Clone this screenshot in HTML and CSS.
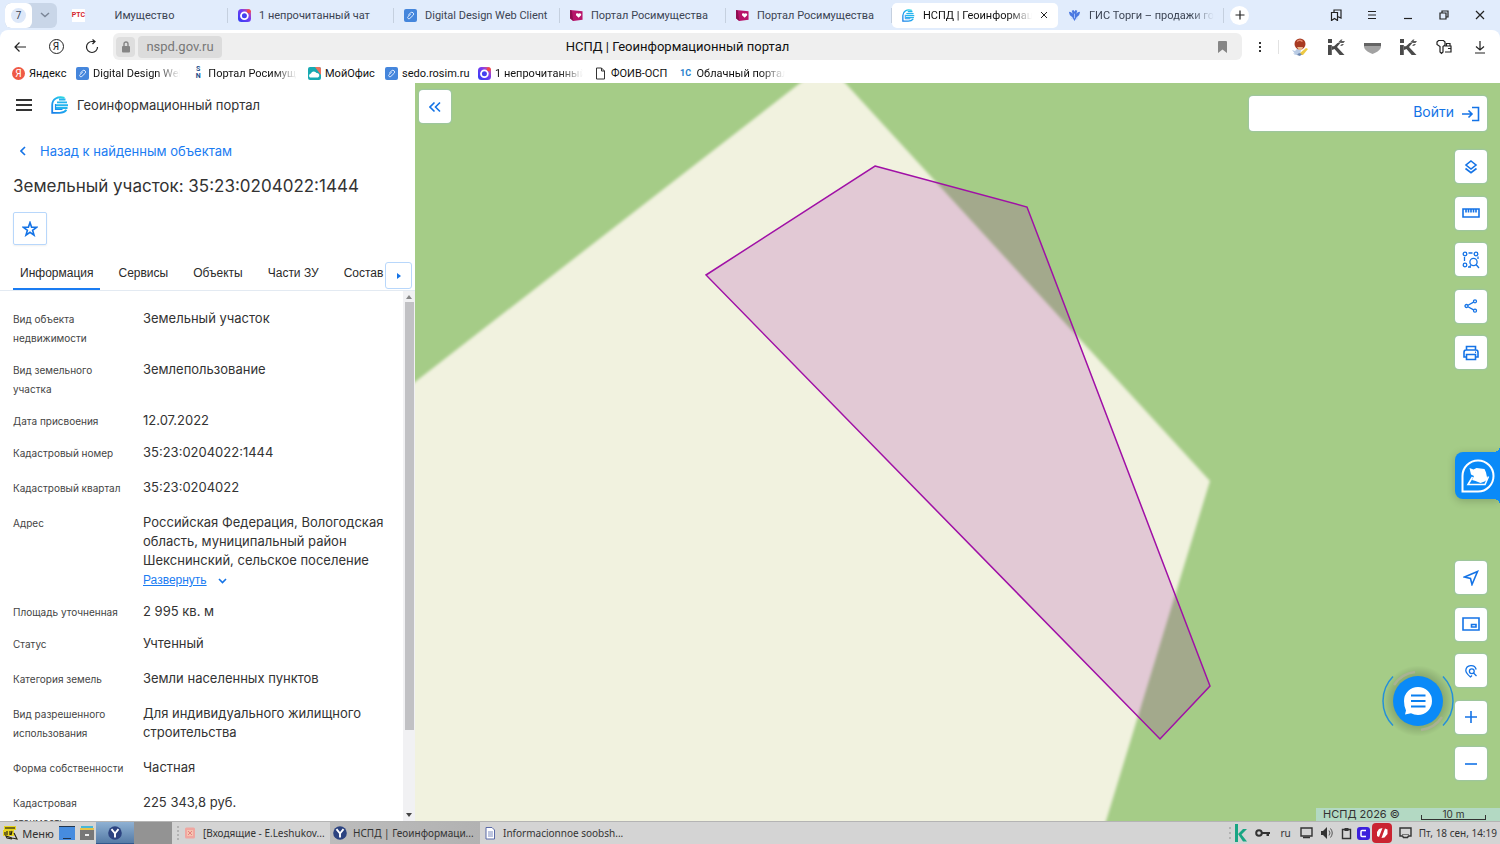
FILE: index.html
```html
<!DOCTYPE html>
<html lang="ru">
<head>
<meta charset="utf-8">
<title>НСПД | Геоинформационный портал</title>
<link rel="stylesheet" href="styles.css">
</head>
<body>
<svg class="defs" aria-hidden="true">
  <defs>
    <linearGradient id="gNspd" x1="0" y1="1" x2="1" y2="0"><stop offset="0" stop-color="#1a7fe8"/><stop offset=".5" stop-color="#1ea8f0"/><stop offset="1" stop-color="#2fe6dc"/></linearGradient>
    <linearGradient id="gChat" x1="0" y1="1" x2="1" y2="0"><stop offset="0" stop-color="#2b3df5"/><stop offset=".6" stop-color="#7a3cf0"/><stop offset="1" stop-color="#ff5a6a"/></linearGradient>
    <symbol id="clip" viewBox="0 0 13 13"><rect width="13" height="13" rx="2" fill="#4586dc"/><path d="M4.2 6.2 6.6 3.8a1.7 1.7 0 0 1 2.5 2.5L5.9 9.4A1.3 1.3 0 0 1 4 7.600L6.800 5" fill="none" stroke="#dceaff" stroke-width="1"/></symbol>
    <symbol id="chat" viewBox="0 0 13 13"><rect width="13" height="13" rx="3.500" fill="url(#gChat)"/><circle cx="6.400" cy="6.800" r="4.300" fill="#fff"/><circle cx="6.400" cy="6.800" r="2.500" fill="#4440f0"/><circle cx="10.800" cy="2.200" r="1.900" fill="#f04848"/></symbol>
    <symbol id="rosim" viewBox="0 0 14 13"><path d="M0 .5 13.500 2v9L3.500 12.500 0 9.500z" fill="#b8146a"/><path d="M3.500 12.500 0 9.500 0 .5l2 1z" fill="#8e0d50"/><path d="M9.300 9 6.500 6.200a1.600 1.600 0 0 1 2.800-1.500 1.600 1.600 0 0 1 2.700 1.600z" fill="#fff"/></symbol>
    <symbol id="nspd" viewBox="0 0 18 18"><path d="M13.500 1.900C6.500-.2 1.200 3.500 1.200 9v7.800h7.500c3 0 5.300-1.200 6.800-3" fill="none" stroke="url(#gNspd)" stroke-width="1.800"/><path d="M8 3.500h6.500M6 6.400h10M5 9.200h12M5 12h11.500" fill="none" stroke="#24b4ee" stroke-width="1.900"/><path d="M4.500 8v5.500h7" fill="none" stroke="#1d8fee" stroke-width="1.200"/></symbol>
    <symbol id="kext" viewBox="0 0 17 16"><path d="M0 0h4v4H0zM0 6h3.800v10H0zM4 7.200h2L9.500 4h2.800L9 8l7.500 8h-4.800L6.500 10 4 11z" fill="#4a4a4a"/><path d="m10 3.500 3-3h1.500l-1 1.500h3.500l-1.500 2h-2M12 6.500l2-1.500h2l-2 2z" fill="#5c5c5c"/></symbol>
    <symbol id="yball" viewBox="0 0 14 14"><circle cx="7" cy="7" r="6.800" fill="#2c4380"/><path d="m3.500 3.200 3.500 4.300v4M10.500 3.200 7 7.500" fill="none" stroke="#fff" stroke-width="1.900"/></symbol>
  </defs>
</svg>

<header class="browser">
  <nav class="tabbar" aria-label="Вкладки">
    <div class="tabgroup"><button class="count"><span>7</span></button><button class="drop" aria-label="Список вкладок"><svg width="10" height="6" viewBox="0 0 10 6"><path d="m1 1 4 3.500L9 1"/></svg></button></div>
    <button class="tab tab-center"><span class="rts">РТС</span><span class="tab-name">Имущество</span></button>
    <button class="tab"><svg class="fav"><use href="#chat"/></svg><span class="tab-name">1 непрочитанный чат</span></button>
    <button class="tab"><svg class="fav"><use href="#clip"/></svg><span class="tab-name">Digital Design Web Client</span></button>
    <button class="tab"><svg class="fav"><use href="#rosim"/></svg><span class="tab-name">Портал Росимущества</span></button>
    <button class="tab"><svg class="fav"><use href="#rosim"/></svg><span class="tab-name">Портал Росимущества</span></button>
    <button class="tab tab-active"><svg class="fav"><use href="#nspd"/></svg><span class="tab-name fade">НСПД | Геоинформаци</span><svg class="close" viewBox="0 0 8 8"><path d="m1 1 6 6M7 1 1 7"/></svg></button>
    <button class="tab"><svg class="fav" viewBox="0 0 14 14"><path d="M1 3c2 0 3 1 4 2L4 2l2-1 1 2 1-2 2 1-1 3c1-1 2-2 4-2-.5 3-1 4.500-3.500 5.500L7 13 4.500 8.500C2 7.500 1.500 6 1 3z" fill="#4b78e0"/><path d="M3.500 9.500 5 11m5.500-1.500L9 11M7 5v5" stroke="#a9c4ff" fill="none"/></svg><span class="tab-name fade">ГИС Торги – продажи гос</span></button>
    <button class="newtab" aria-label="Новая вкладка"><svg width="12" height="12" viewBox="0 0 12 12"><path d="M6 1.500v9M1.500 6h9"/></svg></button>
    <div class="slots">
      <button aria-label="Коллекции"><svg width="12" height="12" viewBox="0 0 12 12"><path d="M1.500 3.500h6v8l-3-2-3 2zM4 3.500V1h7v8L7.500 7.500"/></svg></button>
      <button aria-label="Меню"><svg width="12" height="12" viewBox="0 0 12 12"><path d="M2 2.500h8M2 6h8M2 9.500h8"/></svg></button>
      <button aria-label="Свернуть"><svg width="12" height="12" viewBox="0 0 12 12"><path d="M2 9.500h8"/></svg></button>
      <button aria-label="Развернуть"><svg width="12" height="12" viewBox="0 0 12 12"><path d="M2 4h6v6H2zM4 4V2h6v6H8"/></svg></button>
      <button aria-label="Закрыть"><svg width="12" height="12" viewBox="0 0 12 12"><path d="m2 2 8 8M10 2l-8 8"/></svg></button>
    </div>
  </nav>

  <div class="toolbar">
    <div class="slots">
      <button aria-label="Назад"><svg width="14" height="14" viewBox="0 0 14 14"><path d="M13 7H2M6.500 2.500 2 7l4.500 4.500"/></svg></button>
      <button aria-label="Яндекс"><span class="ya-ring">Я</span></button>
      <button aria-label="Обновить"><svg width="16" height="16" viewBox="0 0 16 16"><path d="M13.500 8A5.500 5.500 0 1 1 8 2.500h3M8.500.5l2.500 2-2.500 2.500"/></svg></button>
    </div>
    <div class="address">
      <button class="lock" aria-label="Сведения о сайте"><svg width="10" height="12" viewBox="0 0 10 12"><rect x="1" y="5" width="8" height="6.500" rx="1" fill="#858585"/><path d="M3 5V3a2 2 0 0 1 4 0v2" fill="none" stroke="#858585" stroke-width="1.400"/></svg></button>
      <button class="host">nspd.gov.ru</button>
      <span class="page-title">НСПД | Геоинформационный портал</span>
      <button class="mark" aria-label="Закладка"><svg width="9" height="12" viewBox="0 0 9 12"><path d="M0 1q0-1 1-1h7q1 0 1 1v11L4.500 8.500 0 12z" fill="#868686"/></svg></button>
    </div>
    <button class="dots" aria-label="Ещё"><svg width="4" height="12" viewBox="0 0 4 12"><path d="M1 1h2v2H1zM1 5h2v2H1zM1 9h2v2H1z" fill="#333"/></svg></button>
    <div class="slots ext">
      <button aria-label="Расширение"><svg width="18" height="18" viewBox="0 0 18 18"><g class="solid"><path d="m1 12 3 1 2-2 4 1-1 5H5zM2 15l3 1-1 1z" fill="#b9cbe4"/><circle cx="9" cy="6" r="5.500" fill="#a83a22"/><path d="M5.500 3q3.500-3 6.500 0l-1 1q-2.500-2-4.500 0z" fill="#e58b70"/><path d="M6 9h6l-1 3H8z" fill="#e9b98e"/><path d="m9 15 6-5 2 1-5 6H9z" fill="#eec943"/><path d="m8 15 3 1-2 2-3-1z" fill="#6d86ad"/></g></svg></button>
      <button aria-label="Расширение K"><svg class="solid" width="17" height="16"><use href="#kext"/></svg></button>
      <button aria-label="Pocket"><svg class="solid" width="17" height="16" viewBox="0 0 17 16"><path d="M0 4h17v4H0z" fill="#646464"/><path d="M0 7h17c0 4-4 6-8.500 8C4 13 0 11 0 7z" fill="#a2a2a2"/></svg></button>
      <button aria-label="Расширение K"><svg class="solid" width="17" height="16"><use href="#kext"/></svg></button>
      <button aria-label="Пароли"><svg width="16" height="16" viewBox="0 0 16 16"><path d="M2.500 1.500h5L9 3v3L7 7.500V13l-1.500 1.500L4 13V7.500L1 5.500V3zM8.500 7h6.500v6H9M10.500 7V4.500H14V7M12 9.500h3"/></svg></button>
      <button aria-label="Загрузки"><svg width="14" height="16" viewBox="0 0 14 16"><path d="M7 2v9M3 7.500 7 11l4-3.500M2 14h10"/></svg></button>
    </div>
  </div>

  <nav class="bookmarks" aria-label="Закладки">
    <a href="#" class="bm1"><span class="ya-red">Я</span><span>Яндекс</span></a>
    <a href="#" class="bm2"><svg class="fav"><use href="#clip"/></svg><span class="fade">Digital Design Web</span></a>
    <a href="#" class="bm3"><span class="sn"><b>S</b><b>N</b></span><span class="fade">Портал Росимуще</span></a>
    <a href="#" class="bm4"><svg class="fav" viewBox="0 0 13 13"><rect width="13" height="13" rx="2" fill="#18aab2"/><path d="M7 0h4q2 0 2 2v6z" fill="#f2715b"/><path d="M2 10.500a2.200 2.200 0 0 1 1-4A3 3 0 0 1 8.500 6a2.400 2.400 0 0 1 1.500 4.500z" fill="#fff"/></svg><span>МойОфис</span></a>
    <a href="#" class="bm5"><svg class="fav"><use href="#clip"/></svg><span>sedo.rosim.ru</span></a>
    <a href="#" class="bm6"><svg class="fav"><use href="#chat"/></svg><span class="fade">1 непрочитанный</span></a>
    <a href="#" class="bm7"><svg class="fav" viewBox="0 0 13 13"><path d="M2.500 1h5l3 3v8h-8zM7.500 1v3h3" fill="none" stroke="#333"/></svg><span>ФОИВ-ОСП</span></a>
    <a href="#" class="bm8"><span class="onec">1С</span><span class="fade">Облачный портал</span></a>
  </nav>
</header>

<main class="work">
  <aside class="panel">
    <div class="brand">
      <button class="burger" aria-label="Меню портала"><svg width="16" height="12" viewBox="0 0 16 12"><path d="M0 1h16M0 6h16M0 11h16"/></svg></button>
      <svg class="logo" width="18" height="18"><use href="#nspd"/></svg>
      <span>Геоинформационный портал</span>
    </div>
    <a href="#" class="back"><svg width="6" height="10" viewBox="0 0 6 10"><path d="M5 1 1 5l4 4"/></svg><span>Назад к найденным объектам</span></a>
    <h1>Земельный участок: 35:23:0204022:1444</h1>
    <button class="star" aria-label="В избранное"><svg width="16" height="16" viewBox="0 0 16 16"><path d="m8 1.500 1.600 4.700 4.900.1-3.900 3 1.400 4.800L8 11.300l-4 2.800 1.400-4.800-3.900-3 4.900-.1z"/></svg></button>
    <div class="tabs" role="tablist">
      <button role="tab" aria-selected="true" class="on">Информация</button>
      <button role="tab">Сервисы</button>
      <button role="tab">Объекты</button>
      <button role="tab">Части ЗУ</button>
      <button role="tab">Состав</button>
      <button class="more" aria-label="Прокрутить вкладки"><svg width="4" height="6" viewBox="0 0 4 6"><path d="M0 0v6l4-3z"/></svg></button>
    </div>
    <div class="scroll">
      <dl>
        <div class="tight"><dt>Вид объекта недвижимости</dt><dd>Земельный участок</dd></div>
        <div class="tight"><dt>Вид земельного участка</dt><dd>Землепользование</dd></div>
        <div class="tight"><dt>Дата присвоения</dt><dd>12.07.2022</dd></div>
        <div><dt>Кадастровый номер</dt><dd>35:23:0204022:1444</dd></div>
        <div><dt>Кадастровый квартал</dt><dd>35:23:0204022</dd></div>
        <div class="tight"><dt>Адрес</dt><dd>Российская Федерация, Вологодская область, муниципальный район Шекснинский, сельское поселение<button class="expand"><u>Развернуть</u><svg width="9" height="6" viewBox="0 0 9 6"><path d="m1 1 3.500 3.500L8 1"/></svg></button></dd></div>
        <div class="tight"><dt>Площадь уточненная</dt><dd>2 995 кв. м</dd></div>
        <div><dt>Статус</dt><dd>Учтенный</dd></div>
        <div><dt>Категория земель</dt><dd>Земли населенных пунктов</dd></div>
        <div><dt>Вид разрешенного использования</dt><dd>Для индивидуального жилищного строительства</dd></div>
        <div><dt>Форма собственности</dt><dd>Частная</dd></div>
        <div><dt>Кадастровая стоимость</dt><dd>225 343,8 руб.</dd></div>
      </dl>
      <div class="rail" aria-hidden="true"><svg width="6" height="4" viewBox="0 0 6 4"><path d="M0 4h6L3 0z" fill="#888"/></svg><i></i><svg width="6" height="4" viewBox="0 0 6 4"><path d="M0 0h6L3 4z" fill="#444"/></svg></div>
    </div>
  </aside>

  <section class="map" aria-label="Карта">
    <svg class="canvas" viewBox="0 0 1085 738" preserveAspectRatio="xMinYMin slice">
      <filter id="soft"><feGaussianBlur stdDeviation="1.500"/></filter>
      <rect width="1085" height="738" fill="#a5cc87"/>
      <path d="M-20 314 0 299 398-10h23L795 398 691 738l-6 20H-20z" fill="#f1f2df" filter="url(#soft)"/>
      <path d="M460 83 612 124 795 603 745 656 291 192z" fill="#9b00a8" fill-opacity=".17" stroke="#a010a6" stroke-width="1.500"/>
    </svg>
    <button class="mbtn collapse" aria-label="Свернуть панель"><svg width="12" height="12" viewBox="0 0 12 12"><path d="M5.500 1.500 1 6l4.500 4.500M11 1.500 6.500 6l4.500 4.500"/></svg></button>
    <div class="login"><button><span>Войти</span><svg width="18" height="16" viewBox="0 0 18 16"><path d="M0 8h10M6.500 4.500 10 8l-3.500 3.500M10 1.500h6.500v13H10"/></svg></button></div>
    <div class="tools tools-top">
      <button class="mbtn" aria-label="Слои"><svg width="14" height="14" viewBox="0 0 14 14"><path d="m7 1 5 4-5 4-5-4zM1.500 8.500 7 12.700l5.500-4.200"/></svg></button>
      <button class="mbtn" aria-label="Линейка"><svg width="18" height="10" viewBox="0 0 18 10"><path d="M1 1h16v8H1zM4 1v3.500M6.500 1v3.500M9 1v3.500M11.500 1v3.500M14 1v3.500"/></svg></button>
      <button class="mbtn" aria-label="Поиск в области"><svg width="18" height="18" viewBox="0 0 18 18"><g><circle cx="3" cy="3" r="1.800"/><circle cx="14" cy="3" r="1.800"/><circle cx="3" cy="14" r="1.800"/><path d="M6.500 2h4M2.500 6v4M16 5.500v2.500M6 16h3"/><circle cx="11.500" cy="11" r="3.600"/><path d="m14 13.500 3 3.500M9 14.500l-1.500 1"/></g></svg></button>
      <button class="mbtn" aria-label="Поделиться"><svg width="14" height="14" viewBox="0 0 14 14"><g><circle cx="2.500" cy="7" r="1.500"/><circle cx="11" cy="2.300" r="1.500"/><circle cx="11" cy="11.700" r="1.500"/><path d="m4 6.200 5.600-3.100M4 7.800l5.600 3.100"/></g></svg></button>
      <button class="mbtn" aria-label="Печать"><svg width="18" height="16" viewBox="0 0 18 16"><path d="M4.500 5V1.500h9V5M4.500 12H2V7.500Q2 5 4 5h10q2 0 2 2.500V12h-2.500M4.500 9.500h9v5h-9z"/><path d="M13 7.300h1"/></svg></button>
    </div>
    <button class="promo" aria-label="Поддержка участников"><svg width="34" height="34" viewBox="0 0 34 34"><path d="M1.500 32.500V17A15.500 15.500 0 1 1 17 32.500z" fill="none" stroke="#fff" stroke-width="2"/><path d="m8.500 9 4 1.500 3-1.500 8 1 1.500 3.500 1.500 7-3 2-4 1.500-5-2-3.500-1 2-4-3-1.500z" fill="#fff"/><path d="m11.500 18-4.500 7.500h17l3.500-8" fill="none" stroke="#fff" stroke-width="1.600"/></svg></button>
    <div class="tools tools-bottom">
      <button class="mbtn" aria-label="Моё местоположение"><svg width="16" height="16" viewBox="0 0 16 16"><path d="M14.500 1.500 1.500 7l6 1.500 1.500 6z"/></svg></button>
      <button class="mbtn" aria-label="Обзорная карта"><svg width="18" height="14" viewBox="0 0 18 14"><path d="M1 1h16v12H1zM9.500 7.500h4.500V10H9.500z"/></svg></button>
      <button class="mbtn" aria-label="Поиск по координатам"><svg width="14" height="14" viewBox="0 0 14 14"><g><path d="M12.200 5.500A5.300 5.300 0 0 0 1.800 6.500C2 9 4 11 6.500 13L8 11.500"/><circle cx="7.800" cy="7.300" r="2.400"/><path d="m9.500 9 3 3"/></g></svg></button>
      <button class="mbtn" aria-label="Приблизить"><svg width="14" height="14" viewBox="0 0 14 14"><path d="M7 1v12M1 7h12"/></svg></button>
      <button class="mbtn" aria-label="Отдалить"><svg width="14" height="14" viewBox="0 0 14 14"><path d="M1 7h12"/></svg></button>
    </div>
    <button class="chat" aria-label="Чат"><svg width="72" height="72" viewBox="0 0 72 72"><path d="M11 11.500a35 35 0 0 0 0 49M61 11.500a35 35 0 0 1 0 49" fill="none" stroke="#2590d8" stroke-width="1.500"/><path d="M12 20A29 29 0 0 1 33 7M60 52A29 29 0 0 1 39 65" fill="none" stroke="#a9b294" stroke-width="2.500"/><circle cx="36" cy="36" r="25" fill="#0a8af8"/><path d="M22 36a14 14 0 1 1 14 14q-4 0-7-1.800L23 49.500l1-4q-2-4-2-9.500z" fill="#fff"/><path d="M29 30.500h14.500M29 36h14.500M29 41.500h14.500" stroke="#0a7ff0" stroke-width="2.200"/></svg></button>
    <div class="credit"><span>НСПД 2026 ©</span><span class="scale">10 m</span></div>
  </section>
</main>

<footer class="taskbar">
  <button class="start"><svg width="15" height="16" viewBox="0 0 15 16"><path d="M1 1h12v4H1zM0 5h11v6H0z" fill="#e8d520"/><path d="M3 2v2M5 2v2M7 2v2M9 2v2M11 2v2M2 7v3M4 6v4M7 6v4M9 6l-1 4M11 8l3 6-5-1-6-2 1 2 5 1" stroke="#282514" fill="none" stroke-width="1.200"/></svg>Меню</button>
  <button class="launch" aria-label="Рабочий стол"><svg width="16" height="16" viewBox="0 0 16 16"><path d="M0 1h16v14H0z" fill="#468cdf"/><path d="M0 1h16v1H0zM4 13h8v1H4z" fill="#21364f"/></svg></button>
  <button class="launch" aria-label="Файлы"><svg width="16" height="16" viewBox="0 0 16 16"><path d="M2 1h12v2H2z" fill="#47b7d8"/><path d="M1 3h14v2H1z" fill="#e5c44b"/><path d="M1 5h14v10H1z" fill="#777"/><path d="M6 9h4v2H6z" fill="#eee"/></svg></button>
  <button class="desk desk-on" aria-label="Рабочее место 1"><svg width="14" height="14"><use href="#yball"/></svg></button>
  <button class="desk" aria-label="Рабочее место 2"></button>
  <svg class="grip" width="4" height="16" viewBox="0 0 4 16"><path d="M1 1h2v2H1zM1 5h2v2H1zM1 9h2v2H1zM1 13h2v2H1z" fill="#b2b2b2"/></svg>
  <button class="task"><svg width="14" height="14" viewBox="0 0 14 14"><rect x="2" y="1.500" width="10" height="11" rx="1.500" fill="#f0a6a0"/><path d="M4 4h6v6H4z" fill="#f5c4b0"/><path d="m5 5 4 4M9 5 5 9" stroke="#e77f7f"/></svg>[Входящие - E.Leshukov...</button>
  <button class="task task-on"><svg width="14" height="14"><use href="#yball"/></svg>НСПД | Геоинформаци...</button>
  <button class="task"><svg width="14" height="14" viewBox="0 0 14 14"><path d="M3 1.500h6l2.500 2.500v9H3z" fill="#fff" stroke="#5a6aa8"/><path d="M5 6h5M5 8h5M5 10h5" stroke="#7c8cc0"/></svg>Informacionnoe soobsh...</button>
  <div class="tray">
    <svg width="4" height="14" viewBox="0 0 4 14"><path d="M1 1h2v2H1zM1 6h2v2H1zM1 11h2v2H1z" fill="#b2b2b2"/></svg>
    <svg width="14" height="18" viewBox="0 0 14 18"><path d="M1 0h3v18H1zM4 10l5-5h4l-5.500 5.500L13 17.500H9z" fill="#18a583"/></svg>
    <svg width="16" height="10" viewBox="0 0 16 10"><circle cx="4" cy="5" r="2.800" fill="none" stroke="#333" stroke-width="2"/><path d="M6.500 4H15v2h-1v2h-2.500V6h-5z" fill="#333"/></svg>
    <span class="lang">ru</span>
    <svg width="13" height="12" viewBox="0 0 13 12"><path d="M1 1h11v8H1z" fill="none" stroke="#333" stroke-width="1.400"/><path d="M3 10.500h7" stroke="#333" stroke-width="1.500"/></svg>
    <svg width="14" height="14" viewBox="0 0 14 14"><path d="M1 5h2l4-4v12L3 9H1z" fill="#333"/><path d="M9 4.500q2 2.500 0 5M10.500 2.500q3.500 4.500 0 9" fill="none" stroke="#555"/></svg>
    <svg width="11" height="13" viewBox="0 0 11 13"><path d="M1.500 2.500h8v9h-8z" fill="none" stroke="#333" stroke-width="1.400"/><path d="M3.500 1h4v3h-4z" fill="#333"/></svg>
    <svg class="cblue" width="13" height="13" viewBox="0 0 13 13"><rect width="13" height="13" rx="3" fill="#3c20dc"/><path d="M9 3.500H5q-1 0-1 1v4q0 1 1 1h4" fill="none" stroke="#fff" stroke-width="1.500"/></svg>
    <svg class="cred" width="20" height="20" viewBox="0 0 20 20"><rect width="20" height="20" rx="4" fill="#ca2431"/><path d="M5 13V9l2-3 3.500-1L7 14zM9.500 15 13 5.500l2.500 1V11l-3 3.500z" fill="#fff"/></svg>
    <svg width="13" height="12" viewBox="0 0 13 12"><path d="M1 1h11v8H9.500l-1 1.500h-4L3.500 9H1z" fill="none" stroke="#333" stroke-width="1.400"/><path d="M3 7.500h7" stroke="#777"/></svg>
    <time>Пт, 18 сен, 14:19</time>
  </div>
</footer>
</body>
</html>
```

FILE: styles.css
```css
* { box-sizing: border-box; }
html, body { height: 100%; }
body {
  margin: 0;
  display: flex;
  flex-direction: column;
  overflow: hidden;
  font-family: "Noto Sans", "Liberation Sans", sans-serif;
  font-size: 10px;
  color: #222;
  background: #fff;
}
button {
  border: 0;
  padding: 0;
  margin: 0;
  background: none;
  font: inherit;
  color: inherit;
  display: flex;
  align-items: center;
  justify-content: center;
  white-space: nowrap;
}
a { text-decoration: none; color: inherit; }
svg { display: block; flex: none; }
.defs { position: absolute; width: 0; height: 0; }
.fav { width: 13px; height: 13px; flex: none; }
.fade {
  overflow: hidden;
  -webkit-mask-image: linear-gradient(to left, transparent, #000 24px);
  mask-image: linear-gradient(to left, transparent, #000 24px);
}

/* Browser chrome */
.browser { flex: none; background: #e1ecfc; font-family: Roboto, "Noto Sans", sans-serif; font-size: 11px; }
.tabbar { display: flex; align-items: center; height: 30px; padding-left: 5px; color: #3c4453; }
.tabgroup { display: flex; width: 52px; height: 25px; margin-right: 5px; border-radius: 6px; background: #c9d6e8; overflow: hidden; flex: none; }
.count { width: 27px; background: #fff; border-radius: 6px; }
.count span { width: 15px; height: 15px; line-height: 15px; border-radius: 8px; background: #dde8f9; font-size: 10px; }
.drop { flex: 1; }
.drop path { fill: none; stroke: #7b8697; stroke-width: 1.500; }
.tab {
  position: relative;
  width: 166px;
  height: 25px;
  padding: 0 10px;
  gap: 8px;
  justify-content: flex-start;
  flex: 0 1 166px;
  min-width: 0;
}
.tab::after { content: ""; position: absolute; right: 0; top: 5px; width: 1px; height: 15px; background: #c5d0df; }
.tab-name { flex: 1; text-align: left; min-width: 0; }
.tab-center .tab-name { text-align: center; padding-right: 22px; }
.tab-active { background: #fff; border-radius: 5px; color: #111; }
.tab-active::after { display: none; }
.close { width: 8px; height: 8px; }
.close path { stroke: #222; }
.rts { width: 13px; background: #fff; color: #d21f30; font-size: 7px; font-weight: 700; line-height: 13px; display: flex; justify-content: center; }
.newtab { width: 19px; height: 19px; margin-left: 6px; border-radius: 10px; background: #fff; flex: none; }
.newtab path, .slots path { fill: none; stroke: #222; stroke-width: 1.200; }
.slots { display: flex; }
.slots button { width: 36px; height: 24px; }
.slots .solid path, #kext path { fill: revert-layer; stroke: none; }
.tabbar .slots { margin-left: auto; padding-right: 2px; }

.toolbar { display: flex; align-items: center; height: 33px; background: #fff; border-radius: 8px 8px 0 0; padding: 0 2px; }
.ya-ring { width: 15px; height: 15px; border: 1px solid #222; border-radius: 8px; font-size: 10px; line-height: 13px; }
.address { flex: 1; height: 27px; margin-left: 3px; padding: 0 15px 0 3px; display: flex; align-items: center; gap: 3px; background: #efefef; border-radius: 6px; }
.lock { width: 19px; height: 20px; background: #dedede; border-radius: 4px; }
.host { width: 84px; height: 22px; background: #dcdcdc; border-radius: 4px; color: #777; font-size: 13px; }
.page-title { flex: 1; text-align: center; padding-right: 85px; color: #111; font-size: 13px; }
.dots { width: 36px; height: 24px; }
.ext { padding-left: 4px; background: linear-gradient(#e2e2e2, #e2e2e2) 0 50% / 1px 14px no-repeat; }

.bookmarks { display: flex; align-items: center; height: 20px; padding-left: 12px; background: #fff; color: #111; }
.bookmarks a { display: flex; align-items: center; gap: 4px; white-space: nowrap; flex: none; }
.bm1 { width: 64px; }
.bm2 { width: 104px; margin-right: 12px; }
.bm3 { width: 105px; margin-right: 11px; }
.bm4 { width: 77px; }
.bm5 { width: 93px; }
.bm6 { width: 105px; margin-right: 11px; }
.bm7 { width: 86px; }
.bm8 { width: 105px; }
.ya-red { width: 13px; height: 13px; border-radius: 7px; background: #ef5a45; color: #fff; font-size: 10px; line-height: 13px; text-align: center; }
.sn { width: 13px; display: flex; flex-direction: column; align-items: center; font-size: 7px; line-height: 7px; color: #1c4f8a; }
.onec { width: 13px; font-size: 9px; font-weight: 700; color: #2580cc; }

/* Page */
.work { flex: 1; min-height: 0; display: flex; font-family: Inter, "Liberation Sans", sans-serif; }
.panel { flex: none; width: 415px; display: flex; flex-direction: column; background: #fff; min-height: 0; }
.brand { display: flex; align-items: center; padding: 13px 15px 0; font-size: 13px; line-height: 18px; color: #333; }
.brand span { margin-left: 8px; }
.burger { width: 17px; margin-right: 19px; }
.burger path { stroke: #333; stroke-width: 1.800; }
.back { display: flex; align-items: center; gap: 14px; padding: 28px 20px 0; font-size: 13px; line-height: 18px; color: #1a7cf2; }
.back path, .mbtn path, .mbtn circle, .login path, .star path, .expand path { fill: none; stroke: #1473e6; stroke-width: 1.600; }
.mbtn g path, .mbtn g circle { stroke-width: 1.300; }
h1 { margin: 15px 13px 0; font-size: 17px; line-height: 22px; font-weight: 400; color: #333; }
.star { width: 34px; height: 33px; margin: 15px 13px 0; border: 1px solid #b8d7fb; border-radius: 2px; box-shadow: 0 1px 2px #0001; }
.tabs { position: relative; display: flex; height: 46px; padding-left: 13px; border-bottom: 1px solid #e3eaf2; font-family: "Liberation Sans", Arial, sans-serif; font-size: 12px; color: #2a2a2a; }
.tabs button { padding: 10px 7px 0; margin-right: 11px; height: 45px; }
.tabs .on { border-bottom: 2px solid #1a7cf2; padding-top: 12px; }
.tabs .more { position: absolute; right: 3px; bottom: 1px; width: 27px; height: 27px; margin: 0; padding: 0; background: #fff; border: 1px solid #b8d7fb; border-radius: 3px; }
.more path { fill: #1473e6; }
.scroll { flex: 1; min-height: 0; display: flex; }
dl { flex: 1; margin: 0; padding: 18px 8px 0 13px; overflow: hidden; }
dl > div { display: flex; margin-bottom: 16px; }
dl > .tight { margin-bottom: 13px; }
dt { flex: none; width: 130px; padding: 1px 16px 0 0; margin-bottom: -1px; font-size: 10px; line-height: 19px; color: #444; }
dd { flex: 1; margin: 0; font-size: 13px; line-height: 19px; color: #333; }
.expand { height: 19px; padding-top: 2px; gap: 11px; font-family: "Liberation Sans", Arial, sans-serif; font-size: 12px; color: #1a7cf2; }
.rail { flex: none; width: 12px; padding: 4px 0; display: flex; flex-direction: column; align-items: center; gap: 3px; background: #f1f1f3; }
.rail i { width: 9px; height: 82%; background: #c1c1c4; }
.rail svg:last-child { margin-top: auto; }

.map { flex: 1; position: relative; overflow: hidden; background: #a5cc87; }
.canvas { position: absolute; inset: 0; width: 100%; height: 100%; }
.mbtn { width: 32px; height: 33px; background: #fff; border-radius: 4px; box-shadow: 0 0 2px #8fb8d8; }
.collapse { position: absolute; left: 4px; top: 7px; }
.login { position: absolute; right: 13px; top: 13px; width: 238px; height: 35px; padding-right: 7px; display: flex; justify-content: flex-end; background: #fff; border-radius: 4px; box-shadow: 0 0 2px #8fb8d8; }
.login button { gap: 8px; font-size: 14px; color: #1473e6; }
.login span { padding-bottom: 4px; }
.tools { position: absolute; right: 13px; height: 219px; display: flex; flex-direction: column; justify-content: space-between; }
.tools-top { top: 67px; }
.tools-bottom { bottom: 41px; }
.promo { position: absolute; right: 0; top: 369px; width: 45px; height: 47px; background: #0a8af8; border-radius: 8px 0 0 8px; box-shadow: 0 2px 8px #0003; }
.promo::before, .promo::after { content: ""; position: absolute; right: 0; width: 6px; height: 6px; }
.promo::before { bottom: 100%; background: radial-gradient(circle at 0 0, transparent 6px, #0a8af8 6px); }
.promo::after { top: 100%; background: radial-gradient(circle at 0 100%, transparent 6px, #0a8af8 6px); }
.chat { position: absolute; right: 46px; bottom: 84px; border-radius: 36px; background: radial-gradient(circle, #0003 45%, transparent 70%); }
.credit { position: absolute; right: 0; bottom: 0; width: 184px; height: 13px; padding: 0 14px 0 7px; display: flex; justify-content: space-between; background: #b3d9c3; font-size: 11px; line-height: 13px; color: #333; }
.scale {
  width: 65px;
  height: 12px;
  border-bottom: 1px solid #333;
  text-align: center;
  font-size: 10px;
  line-height: 12px;
  background: linear-gradient(#333, #333) 0 100% / 1px 4px no-repeat, linear-gradient(#333, #333) 100% 100% / 1px 4px no-repeat;
}

/* Desktop taskbar */
.taskbar { flex: none; height: 23px; display: flex; align-items: center; background: #d4d4d4; border-top: 1px solid #b4b4b4; color: #333; }
.start { width: 57px; gap: 4px; font-size: 11px; }
.launch { width: 20px; }
.desk { width: 38px; height: 22px; background: #939393; }
.desk-on { background: linear-gradient(#8fb1d3, #557ba6); border-bottom: 1px solid #30588c; margin-left: -1px; }
.grip { margin-left: 4px; }
.task { width: 150px; height: 22px; padding-left: 3px; gap: 6px; justify-content: flex-start; }
.task-on { background: linear-gradient(90deg, #bcbcbc, #b2b2b2); }
.tray { display: flex; align-items: center; gap: 7px; margin-left: auto; padding-right: 3px; }
.tray > svg:first-child { margin-right: -5px; }
.lang { margin: 0 2px; }
.cblue { margin-left: -2px; }
.cred { margin-left: -5px; }
```
